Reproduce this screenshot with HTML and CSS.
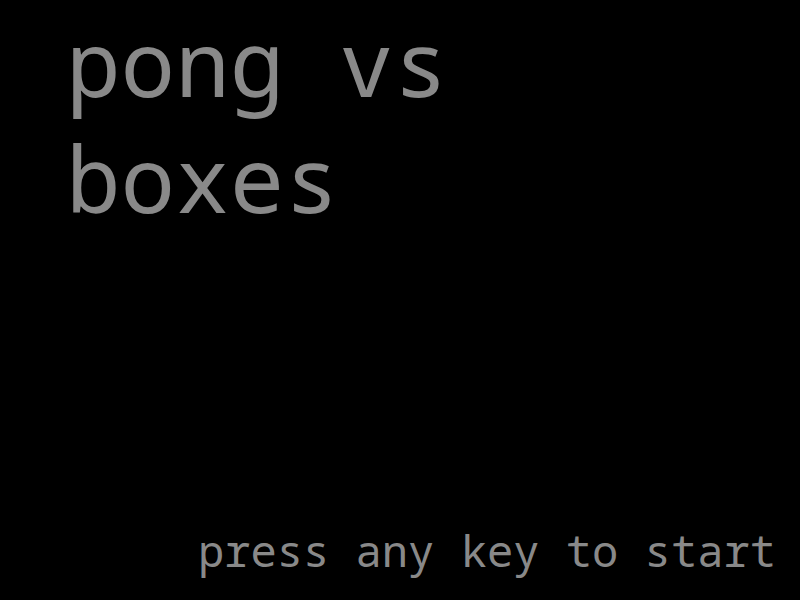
FILE: index.html
```html
<!DOCTYPE html>
<html>
<head>
<meta charset="utf-8">
<link rel="stylesheet" href="styles.css">
</head>
<body>
<main class="screen">
  <h1 class="title">pong vs<br>boxes</h1>
  <p class="prompt">press any key to start</p>
</main>
</body>
</html>
```
FILE: styles.css
```css
html, body {
  margin: 0;
  padding: 0;
  background: #000;
  width: 800px;
  height: 600px;
  overflow: hidden;
}
.screen {
  width: 800px;
  height: 600px;
  display: flex;
  flex-direction: column;
  justify-content: space-between;
  box-sizing: border-box;
  padding: 4px 24px 25px 66px;
  font-family: "Noto Sans Mono", "Droid Sans Mono", "DejaVu Sans Mono", monospace;
  color: #898989;
}
.title {
  margin: 0;
  font-weight: normal;
  font-size: 91px;
  line-height: 116px;
}
.prompt {
  margin: 0;
  font-size: 43.8px;
  line-height: 50px;
  text-align: right;
}
```
